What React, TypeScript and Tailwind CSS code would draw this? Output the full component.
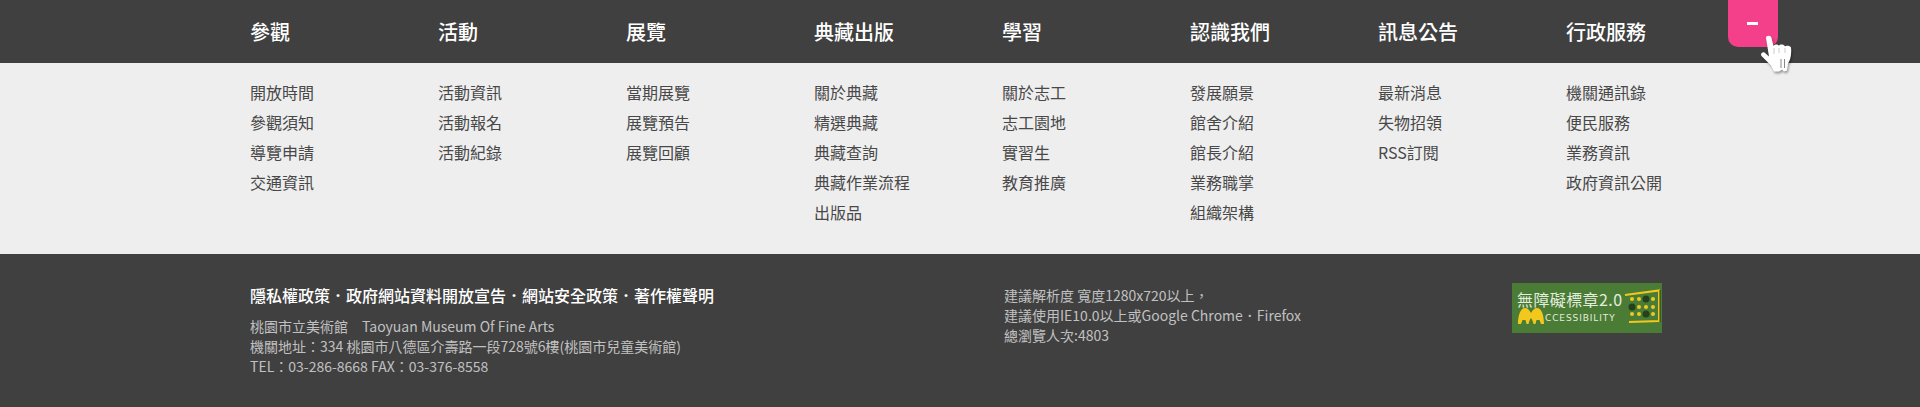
const menu = [
  { title: "參觀", items: ["開放時間", "參觀須知", "導覽申請", "交通資訊"] },
  { title: "活動", items: ["活動資訊", "活動報名", "活動紀錄"] },
  { title: "展覽", items: ["當期展覽", "展覽預告", "展覽回顧"] },
  { title: "典藏出版", items: ["關於典藏", "精選典藏", "典藏查詢", "典藏作業流程", "出版品"] },
  { title: "學習", items: ["關於志工", "志工園地", "實習生", "教育推廣"] },
  { title: "認識我們", items: ["發展願景", "館舍介紹", "館長介紹", "業務職掌", "組織架構"] },
  { title: "訊息公告", items: ["最新消息", "失物招領", "RSS訂閱"] },
  { title: "行政服務", items: ["機關通訊錄", "便民服務", "業務資訊", "政府資訊公開"] },
];

function HandCursor() {
  return (
    <svg width="38" height="40" viewBox="0 0 38 40" className="absolute left-[32px] top-[35px] drop-shadow-[1px_2px_1px_rgba(0,0,0,0.35)]">
      <path
        d="M6 3c0-3 5-3 5.500 0l2 8c1-2 5-2 5.500 0 .5-2 5-2 6 .5.500-1 5-1.500 6 1 .5 4 0 9-1 12l-2 4-1 7-3 1-2-2-3 2h-5l-3-6L1.500 21c-1.500-2.500 1-4.500 3-3.500l4.500 4z"
        fill="#fff"
      />
      <path d="M21 24v9M24.500 24v9" stroke="#888" strokeWidth="1" />
      <path d="M14 13v6M19 13v5M25 13v5" stroke="#ccc" strokeWidth="1" />
    </svg>
  );
}

function Badge() {
  const dots = [
    [8, 11],
    [15, 11],
    [29, 11],
    [15, 19],
    [22, 19],
    [29, 19],
    [8, 26],
    [15, 26],
    [29, 26],
  ];
  return (
    <div className="relative w-[150px] h-[50px] bg-[#4a7c35] overflow-hidden">
      <span className="absolute left-[5px] top-[4px] text-[16px] leading-[24px] tracking-[0.4px] text-[#e4ecdf] whitespace-nowrap">
        無障礙標章2.0
      </span>
      <svg width="26" height="18" viewBox="0 0 26 18" className="absolute left-[6px] top-[25px]">
        <path
          d="M0 16C0 6 3 0 7 0c2.500 0 4.500 2 6 5 1.500-3 3.500-5 6-5 4 0 7 6 7 16h-3c-.5-1-1-3-1.500-4h-3l-1 4h-2c-.5-2-1-4-2.500-6-1.500 2-2 4-2.500 6h-2l-1-4h-3C4 13 3.500 15 3 16z"
          fill="#f2c81e"
        />
      </svg>
      <span className="absolute left-[33px] top-[28px] font-['DejaVu_Sans',sans-serif] text-[9px] leading-[14px] tracking-[0.9px] text-[#e4ecdf] whitespace-nowrap">
        CCESSIBILITY
      </span>
      <svg width="38" height="38" viewBox="0 0 38 38" className="absolute left-[112px] top-[5px]">
        <path d="M1 7l34-4.500V33l-30 1" fill="none" stroke="#f2c81e" strokeWidth="2" />
        <path d="M36 2v32" stroke="#25401c" strokeWidth="1" />
        {dots.map(([x, y]) => (
          <circle key={`${x}-${y}`} cx={x} cy={y} r="2" fill="#f2c81e" />
        ))}
        <circle cx="22" cy="11" r="3.500" fill="#25401c" />
        <circle cx="8" cy="19" r="3.500" fill="#25401c" />
        <circle cx="22" cy="26" r="3.500" fill="#25401c" />
      </svg>
    </div>
  );
}

export default function App() {
  return (
    <div className="w-[1920px] h-[407px] overflow-hidden font-['Noto_Sans_CJK_TC','Noto_Sans',sans-serif]">
      <div className="h-[63px] bg-[#404040]">
        <div className="relative ml-[250px] flex h-full">
          {menu.map((col) => (
            <div key={col.title} className="w-[188px] pt-[18px] text-[20px] leading-[28px] font-medium text-white">
              {col.title}
            </div>
          ))}
          <div className="absolute left-[1478px] top-0 w-[50px] h-[47px] rounded-b-[10px] bg-[#f43f8a]">
            <div className="absolute left-[19px] top-[22px] w-[11px] h-[3px] bg-white" />
            <HandCursor />
          </div>
        </div>
      </div>

      <div className="h-[191px] bg-[#eeeeee] pt-[14px]">
        <div className="ml-[250px] flex">
          {menu.map((col) => (
            <ul key={col.title} className="w-[188px] text-[16px] leading-[30px] text-[#484848]">
              {col.items.map((item) => (
                <li key={item}>{item}</li>
              ))}
            </ul>
          ))}
        </div>
      </div>

      <div className="h-[153px] bg-[#404040] pt-[29px]">
        <div className="ml-[250px] flex items-start">
          <div className="w-[754px]">
            <p className="text-[16px] leading-[24px] font-medium text-white">
              隱私權政策．政府網站資料開放宣告．網站安全政策．著作權聲明
            </p>
            <div className="mt-[9px] text-[14px] leading-[20px] text-[#c0c0c0]">
              <p>桃園市立美術館　Taoyuan Museum Of Fine Arts</p>
              <p>機關地址：334 桃園市八德區介壽路一段728號6樓(桃園市兒童美術館)</p>
              <p>TEL：03-286-8668 FAX：03-376-8558</p>
            </div>
          </div>
          <div className="w-[508px] pt-[2px] text-[14px] leading-[20px] text-[#c0c0c0]">
            <p>建議解析度 寬度1280x720以上，</p>
            <p>建議使用IE10.0以上或Google Chrome．Firefox</p>
            <p>總瀏覽人次:4803</p>
          </div>
          <Badge />
        </div>
      </div>
    </div>
  );
}
